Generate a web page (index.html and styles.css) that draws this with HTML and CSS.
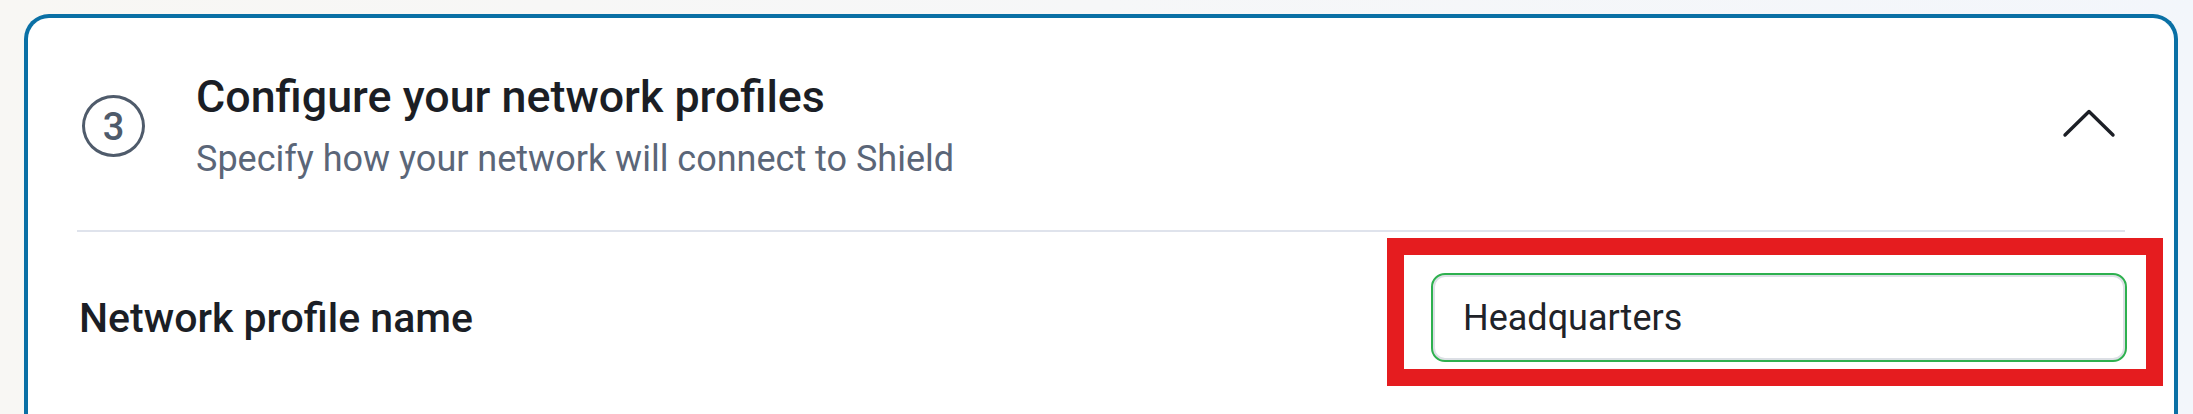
FILE: index.html
```html
<!DOCTYPE html>
<html lang="en">
<head>
<meta charset="utf-8">
<title>Configure your network profiles</title>
<link rel="stylesheet" href="styles.css">
</head>
<body>
<section class="card">
  <header class="step-header">
    <div class="step-number">3</div>
    <div class="step-text">
      <h2 class="step-title">Configure your network profiles</h2>
      <p class="step-subtitle">Specify how your network will connect to Shield</p>
    </div>
    <button class="collapse-btn" aria-label="Collapse">
      <svg width="56" height="34" viewBox="0 0 56 34" fill="none">
        <path d="M4 27 L28 3.5 L52 27" stroke="#1c1f26" stroke-width="3.4" stroke-linecap="round" stroke-linejoin="round"/>
      </svg>
    </button>
  </header>
  <div class="divider"></div>
  <div class="field-row">
    <label class="field-label" for="profile-name">Network profile name</label>
    <div class="field-wrap">
      <input id="profile-name" class="text-input" type="text" value="Headquarters">
      <div class="highlight"></div>
    </div>
  </div>
</section>
</body>
</html>
```
FILE: styles.css
```css
* { box-sizing: border-box; }
html, body { margin: 0; height: 100%; }
body {
  background: linear-gradient(90deg, #f8f7f4 0%, #f6f7f8 50%, #f3f6fb 100%);
  font-family: Roboto, "Liberation Sans", Arial, sans-serif;
  overflow: hidden;
}
.card {
  margin: 14px 15px 0 24px;
  height: 600px;
  background: #fff;
  border: 4px solid #0a70a5;
  border-bottom: none;
  border-radius: 25px 25px 0 0;
  padding: 0 49px;
}
.step-header {
  height: 212px;
  display: flex;
  align-items: center;
}
.step-number {
  width: 63px;
  height: 62px;
  margin-left: 5px;
  margin-top: 4px;
  border: 3.5px solid #4f5b6b;
  border-radius: 50%;
  display: flex;
  align-items: center;
  justify-content: center;
  color: #4f5b6b;
  font-size: 38px;
  font-weight: 500;
  line-height: 1;
  padding-top: 1px;
}
.step-text {
  margin-left: 51px;
  margin-top: 3px;
  flex: 1;
}
.step-title {
  margin: 0;
  font-size: 44.8px;
  font-weight: 500;
  color: #1b1e25;
  line-height: 52px;
}
.step-subtitle {
  margin: 14px 0 0;
  font-size: 36px;
  font-weight: 400;
  color: #5b6678;
  line-height: 44px;
}
.collapse-btn {
  border: 0;
  background: none;
  padding: 0;
  margin-right: 8px;
  margin-top: 2px;
  display: flex;
}
.divider {
  height: 2px;
  background: #dfe3ec;
}
.field-row {
  display: flex;
  align-items: center;
  justify-content: space-between;
  padding-top: 41px;
}
.field-label {
  margin-left: 2px;
  font-size: 41px;
  font-weight: 500;
  color: #1b1e25;
}
.field-wrap {
  position: relative;
  width: 696px;
  margin-right: -2px;
}
.text-input {
  display: block;
  width: 100%;
  height: 89px;
  border: 2px solid #2eb04f;
  border-radius: 14px;
  box-shadow: inset 0 0 0 2px #dcdfe5;
  padding: 0 30px;
  font-family: inherit;
  font-size: 36px;
  color: #1f2329;
  background: #fff;
  outline: none;
}
.highlight {
  position: absolute;
  left: -44px;
  right: -36px;
  top: -35px;
  bottom: -24px;
  border: 17px solid #e51c1f;
  pointer-events: none;
}
```
